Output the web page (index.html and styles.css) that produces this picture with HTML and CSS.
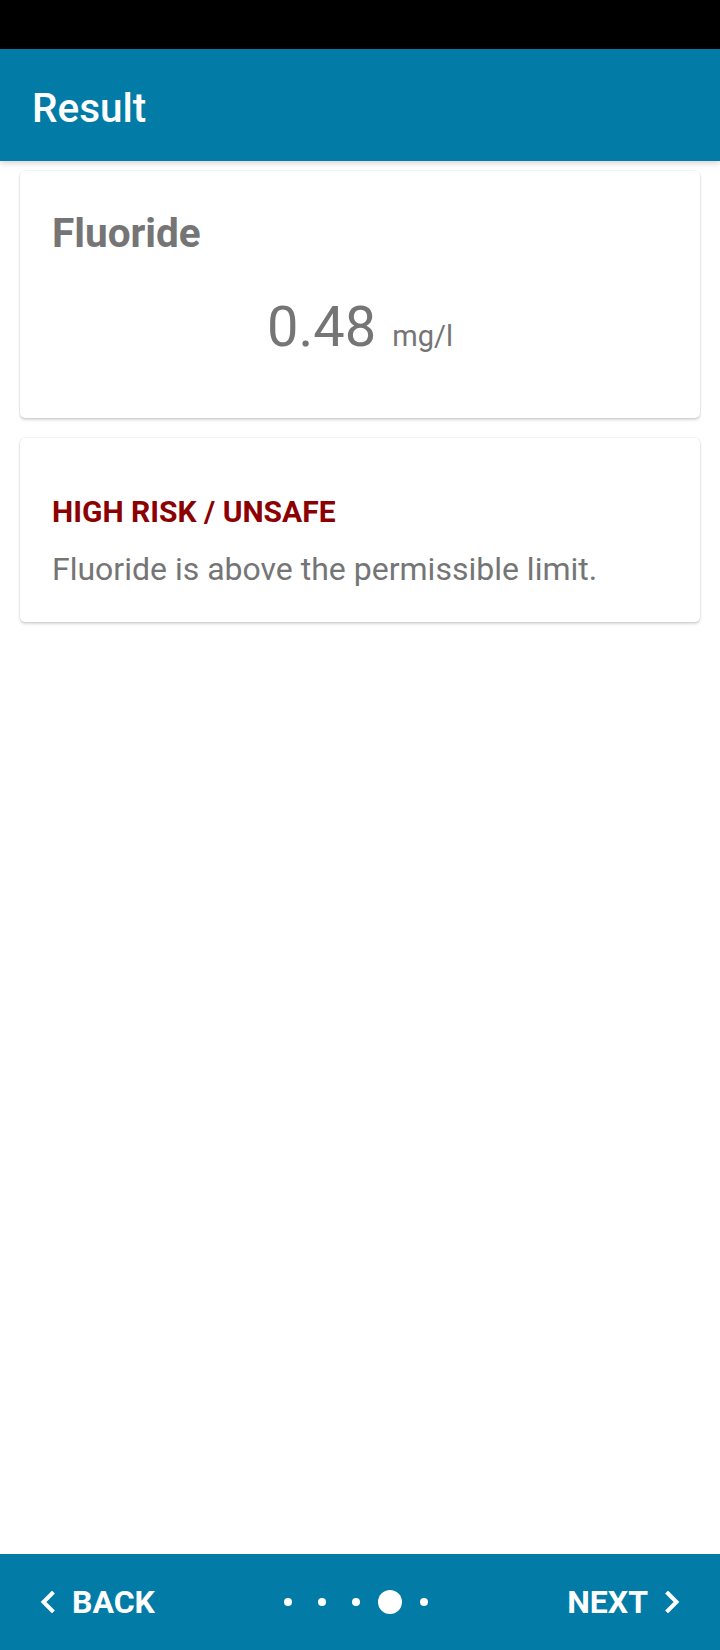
FILE: index.html
```html
<!DOCTYPE html>
<html>
<head>
<meta charset="utf-8">
<link rel="stylesheet" href="styles.css">
</head>
<body>
<div class="screen">
  <div class="status-bar"></div>
  <header class="app-bar"><h1 class="app-title">Result</h1></header>
  <main class="content">
    <section class="card card-value">
      <h2 class="param-name">Fluoride</h2>
      <div class="value-row">
        <span class="value">0.48</span>
        <span class="unit">mg/l</span>
      </div>
    </section>
    <section class="card card-risk">
      <div class="risk-label">HIGH RISK / UNSAFE</div>
      <p class="risk-text">Fluoride is above the permissible limit.</p>
    </section>
  </main>
  <nav class="bottom-bar">
    <div class="nav-btn nav-back">
      <svg class="chev" width="16" height="22" viewBox="0 0 16 22"><polyline points="12,2.5 3.5,11 12,19.5" fill="none" stroke="#fff" stroke-width="4" stroke-linecap="square"/></svg>
      <span>BACK</span>
    </div>
    <div class="dots">
      <span class="dot-cell"><span class="dot"></span></span>
      <span class="dot-cell"><span class="dot"></span></span>
      <span class="dot-cell"><span class="dot"></span></span>
      <span class="dot-cell"><span class="dot dot-active"></span></span>
      <span class="dot-cell"><span class="dot"></span></span>
    </div>
    <div class="nav-btn nav-next">
      <span>NEXT</span>
      <svg class="chev" width="16" height="22" viewBox="0 0 16 22"><polyline points="4,2.5 12.5,11 4,19.5" fill="none" stroke="#fff" stroke-width="4" stroke-linecap="square"/></svg>
    </div>
  </nav>
</div>
</body>
</html>
```
FILE: styles.css
```css
html, body {
  margin: 0;
  padding: 0;
  background: #ffffff;
}
.screen {
  width: 720px;
  height: 1650px;
  display: flex;
  flex-direction: column;
  font-family: Roboto, "Noto Sans", sans-serif;
  overflow: hidden;
}
.status-bar {
  height: 49px;
  background: #000000;
  flex: none;
}
.app-bar {
  height: 112px;
  flex: none;
  background: #027ca6;
  display: flex;
  align-items: center;
  padding: 6px 0 0 32px;
  box-sizing: border-box;
  box-shadow: 0 2px 6px rgba(0, 0, 0, 0.18);
  position: relative;
  z-index: 1;
}
.app-title {
  margin: 0;
  color: #ffffff;
  font-size: 40.5px;
  font-weight: 500;
  line-height: 48px;
}
.content {
  flex: 1;
  display: flex;
  flex-direction: column;
  gap: 20px;
  padding: 10px 20px;
}
.card {
  background: #ffffff;
  border-radius: 5px;
  box-shadow: 0 0 0 1px rgba(0, 0, 0, 0.04), 0 2px 3px rgba(0, 0, 0, 0.16);
  padding: 0 32px;
}
.card-value {
  height: 247px;
  box-sizing: border-box;
  padding-top: 38px;
}
.param-name {
  margin: 0;
  color: #757575;
  font-size: 40.5px;
  font-weight: 700;
  line-height: 48px;
}
.value-row {
  display: flex;
  justify-content: center;
  align-items: baseline;
  gap: 16px;
  margin-top: 38px;
  color: #757575;
}
.value {
  font-size: 56px;
  line-height: 64px;
  font-weight: 400;
}
.unit {
  font-size: 29px;
  font-weight: 400;
}
.card-risk {
  height: 184px;
  box-sizing: border-box;
  padding-top: 56px;
}
.risk-label {
  color: #8b0000;
  font-size: 30px;
  font-weight: 700;
  line-height: 36px;
}
.risk-text {
  margin: 19px 0 0;
  color: #757575;
  font-size: 32px;
  line-height: 40px;
}
.bottom-bar {
  height: 96px;
  flex: none;
  background: #027ca6;
  display: flex;
  align-items: center;
  color: #ffffff;
  font-size: 32px;
  font-weight: 700;
}
.nav-btn {
  display: flex;
  align-items: center;
  gap: 16px;
  box-sizing: border-box;
}
.nav-back {
  width: 200px;
  padding-left: 40px;
}
.nav-next {
  width: 209px;
  justify-content: flex-end;
  padding-right: 40px;
  gap: 16px;
}
.chev {
  display: block;
  flex: none;
}
.dots {
  flex: 1;
  display: flex;
  justify-content: center;
  align-items: center;
}
.dot-cell {
  width: 34px;
  height: 24px;
  display: flex;
  align-items: center;
  justify-content: center;
}
.dot {
  width: 8px;
  height: 8px;
  border-radius: 50%;
  background: #ffffff;
}
.dot-active {
  width: 24px;
  height: 24px;
}
```
